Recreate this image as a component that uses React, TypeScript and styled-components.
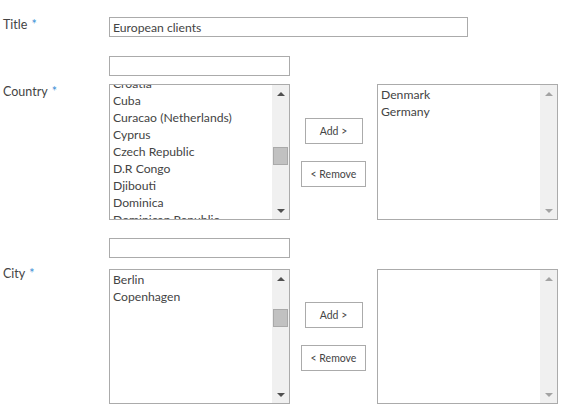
import React from "react";
import styled, { createGlobalStyle } from "styled-components";

const Global = createGlobalStyle`
  html, body { margin: 0; padding: 0; background: #fff; }
  body { font-family: "Lato", "Open Sans", sans-serif; color: #444; }
`;

const Page = styled.div`
  padding-top: 17px;
  display: flex;
  flex-direction: column;
`;

const Grid = styled.div<{ $gap?: number; $mt?: number }>`
  display: grid;
  grid-template-columns: 109px auto;
  row-gap: ${(p) => p.$gap ?? 0}px;
  margin-top: ${(p) => p.$mt ?? 0}px;
  align-items: start;
`;

const Label = styled.div<{ $top?: number; $span?: boolean }>`
  padding-left: 3px;
  font-size: 12.5px;
  line-height: 16px;
  color: #444;
  padding-top: ${(p) => p.$top ?? 0}px;
  ${(p) => (p.$span ? "grid-row: 1 / span 2;" : "")}
`;

const Star = styled.span`
  color: #3b8fd6;
  margin-left: 4px;
`;

const TextInput = styled.div<{ $w: number }>`
  box-sizing: border-box;
  width: ${(p) => p.$w}px;
  height: 20px;
  border: 1px solid #ababab;
  background: #fff;
  padding: 0 3px;
  font-size: 12.2px;
  line-height: 20px;
  color: #444;
`;

const Picker = styled.div`
  display: grid;
  grid-template-columns: 181px 87px 181px;
  align-items: center;
`;

const ListBox = styled.div<{ $h: number }>`
  box-sizing: border-box;
  height: ${(p) => p.$h}px;
  border: 1px solid #ababab;
  display: flex;
  background: #fff;
  overflow: hidden;
`;

const ListArea = styled.div`
  flex: 1;
  overflow: hidden;
  padding: 1px 3px 0;
`;

const Items = styled.div<{ $offset: number }>`
  margin-top: ${(p) => -p.$offset}px;
`;

const Item = styled.div`
  font-size: 12.2px;
  line-height: 17px;
  height: 17px;
  white-space: nowrap;
  color: #444;
`;

const Track = styled.div`
  width: 17px;
  background: #f0f0f0;
  display: flex;
  flex-direction: column;
  align-items: center;
  position: relative;
`;

const Arrow = styled.div<{ $down?: boolean; $light?: boolean }>`
  width: 17px;
  height: 17px;
  display: flex;
  align-items: center;
  justify-content: center;
  ${(p) => (p.$down ? "margin-top: auto;" : "")}
  &::before {
    content: "";
    width: 0;
    height: 0;
    border-left: 4px solid transparent;
    border-right: 4px solid transparent;
    ${(p) =>
      p.$down
        ? `border-top: 4px solid ${p.$light ? "#a3a3a3" : "#505050"};`
        : `border-bottom: 4px solid ${p.$light ? "#a3a3a3" : "#505050"};`}
  }
`;

const Thumb = styled.div<{ $top: number }>`
  position: absolute;
  left: 1px;
  top: ${(p) => p.$top}px;
  width: 13px;
  height: 16px;
  background: #c1c1c1;
  border: 1px solid #a9a9a9;
`;

const Buttons = styled.div`
  display: flex;
  flex-direction: column;
  align-items: center;
  gap: 17px;
`;

const Button = styled.div<{ $w: number }>`
  box-sizing: border-box;
  width: ${(p) => p.$w}px;
  height: 26px;
  border: 1px solid #ababab;
  background: #fff;
  display: flex;
  align-items: center;
  justify-content: center;
  font-size: 10.5px;
  color: #444;
`;

type ListProps = {
  items: string[];
  offset?: number;
  thumb?: number;
  height: number;
};

function List({ items, offset = 0, thumb, height }: ListProps) {
  const active = thumb !== undefined;
  return (
    <ListBox $h={height}>
      <ListArea>
        <Items $offset={offset}>
          {items.map((i) => (
            <Item key={i}>{i}</Item>
          ))}
        </Items>
      </ListArea>
      <Track>
        <Arrow $light={!active} />
        {active && <Thumb $top={thumb!} />}
        <Arrow $down $light={!active} />
      </Track>
    </ListBox>
  );
}

type SectionProps = {
  label: string;
  left: string[];
  right: string[];
  leftOffset?: number;
  thumb: number;
  mt: number;
  gap: number;
  height: number;
};

function Section({ label, left, right, leftOffset, thumb, mt, gap, height }: SectionProps) {
  return (
    <Grid $gap={gap} $mt={mt}>
      <Label $top={28} $span>
        {label}
        <Star>*</Star>
      </Label>
      <TextInput $w={181} />
      <Picker>
        <List items={left} offset={leftOffset} thumb={thumb} height={height} />
        <Buttons>
          <Button $w={58}>Add &gt;</Button>
          <Button $w={65}>&lt; Remove</Button>
        </Buttons>
        <List items={right} height={height} />
      </Picker>
    </Grid>
  );
}

export default function App() {
  return (
    <>
      <Global />
      <Page>
        <Grid>
          <Label $top={0}>
            Title<Star>*</Star>
          </Label>
          <TextInput $w={359}>European clients</TextInput>
        </Grid>
        <Section
          label="Country"
          mt={19}
          gap={8}
          height={136}
          left={[
            "Croatia",
            "Cuba",
            "Curacao (Netherlands)",
            "Cyprus",
            "Czech Republic",
            "D.R Congo",
            "Djibouti",
            "Dominica",
            "Dominican Republic",
          ]}
          leftOffset={11}
          thumb={62}
          right={["Denmark", "Germany"]}
        />
        <Section
          label="City"
          mt={18}
          gap={11}
          height={135}
          left={["Berlin", "Copenhagen"]}
          thumb={39}
          right={[]}
        />
      </Page>
    </>
  );
}
